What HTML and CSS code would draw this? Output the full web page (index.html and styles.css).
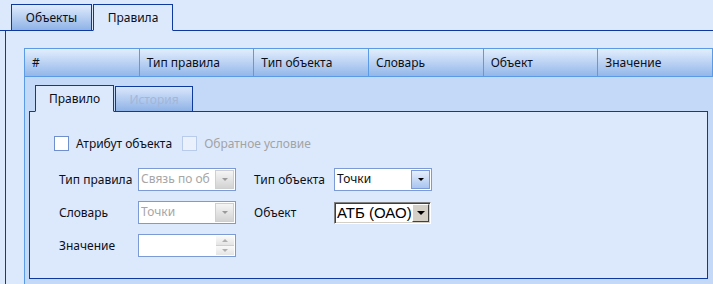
FILE: index.html
```html
<!DOCTYPE html>
<html lang="ru">
<head>
    <meta charset="UTF-8">
    <meta name="viewport" content="width=device-width, initial-scale=1.0">
    <title>Правила</title>
    <link rel="stylesheet" href="styles.css">
</head>
<body>
    <div class="tabs">
        <div class="tab">Объекты</div>
        <div class="tab active">Правила</div>
    </div>
    <div class="panel">
        <div class="grid">
            <div class="grid-head">
                <div class="col">#</div>
                <div class="col">Тип правила</div>
                <div class="col">Тип объекта</div>
                <div class="col">Словарь</div>
                <div class="col">Объект</div>
                <div class="col">Значение</div>
            </div>
            <div class="grid-body">
                <div class="subtabs">
                    <div class="subtab active">Правило</div>
                    <div class="subtab disabled">История</div>
                </div>
                <div class="subpanel">
                    <div class="checks">
                        <label class="check"><span class="box"></span>Атрибут объекта</label>
                        <label class="check disabled"><span class="box"></span>Обратное условие</label>
                    </div>
                    <div class="form">
                        <span class="lbl">Тип правила</span>
                        <div class="combo disabled">
                            <span class="val">Связь по об</span>
                            <span class="btn"><i class="arrow"></i></span>
                        </div>
                        <span></span>
                        <span class="lbl">Тип объекта</span>
                        <div class="combo">
                            <span class="val">Точки</span>
                            <span class="btn"><i class="arrow"></i></span>
                        </div>

                        <span class="lbl">Словарь</span>
                        <div class="combo disabled">
                            <span class="val">Точки</span>
                            <span class="btn"><i class="arrow"></i></span>
                        </div>
                        <span></span>
                        <span class="lbl">Объект</span>
                        <div class="native">
                            <span class="val">АТБ (ОАО)</span>
                            <span class="btn"><i class="arrow"></i></span>
                        </div>

                        <span class="lbl">Значение</span>
                        <div class="spinner">
                            <span class="val"></span>
                            <span class="spin">
                                <span class="up"><i></i></span>
                                <span class="down"><i></i></span>
                            </span>
                        </div>
                    </div>
                </div>
            </div>
        </div>
    </div>
</body>
</html>
```

FILE: styles.css
```css
body {
    margin: 0;
    height: 284px;
    overflow: hidden;
    background: #dce9fd;
    font-family: "Noto Sans", sans-serif;
    font-size: 12px;
    color: #0c0f18;
}

/* top tabs */
.tabs {
    display: flex;
    align-items: flex-end;
    gap: 1px;
    height: 31px;
    box-sizing: border-box;
    padding: 4px 0 0 11px;
    border-bottom: 1px solid #0e3a9e;
}
.tab {
    height: 27px;
    width: 81px;
    box-sizing: border-box;
    margin-bottom: -1px;
    border: 1px solid #0e3a9e;
    background: linear-gradient(#e0ebfc, #8fb3e7);
    line-height: 25px;
    text-align: center;
}
.tab.active {
    width: 80px;
    background: #dce9fd;
    border-bottom-color: #dce9fd;
}

.panel {
    margin-left: 5px;
    height: 236px;
    border-left: 1px solid #0e3a9e;
    padding: 17px 0 0 18px;
}

/* grid */
.grid {
    width: 689px;
}
.grid-head {
    display: grid;
    grid-template-columns: repeat(6, 1fr);
    height: 29px;
    box-sizing: border-box;
    border: 1px solid #5b9be6;
    border-left: none;
    background: linear-gradient(#e3eefd, #93b7e9);
}
.grid-head .col {
    border-left: 1px solid #5b9be6;
    padding-left: 7px;
    line-height: 27px;
    white-space: nowrap;
    overflow: hidden;
}
.grid-body {
    height: 199px;
    border-left: 1px solid #5b9be6;
    background: #c4d9f7;
    padding: 8px 0 0 4px;
}

/* inner tabs */
.subtabs {
    display: flex;
    align-items: flex-end;
    gap: 1px;
    height: 26px;
    padding-left: 6px;
}
.subtab {
    height: 27px;
    width: 79px;
    box-sizing: border-box;
    margin-bottom: -1px;
    border: 1px solid #0e3a9e;
    background: linear-gradient(#d9e6fb, #8fb3e7);
    line-height: 25px;
    text-align: center;
    position: relative;
}
.subtab.active {
    background: #dce9fd;
    border-bottom-color: #dce9fd;
    z-index: 1;
}
.subtab.disabled {
    width: 78px;
    height: 26px;
    color: #a3b6d8;
}
.subpanel {
    width: 679px;
    height: 168px;
    box-sizing: border-box;
    border: 1px solid #0e3a9e;
    background: #dce9fd;
    padding: 23px 0 0 24px;
}

/* checkboxes */
.checks {
    display: flex;
    gap: 10px;
    height: 16px;
}
.check {
    display: flex;
    align-items: center;
    gap: 7px;
}
.check .box {
    width: 13px;
    height: 13px;
    border: 1px solid #6f8fcf;
    background: #fff;
}
.check.disabled {
    color: #a3a3a3;
}
.check.disabled .box {
    border-color: #b8cbea;
    background: #eaf1fd;
}

/* form */
.form {
    display: grid;
    grid-template-columns: 79px 98px 18px 80px 98px;
    grid-auto-rows: 23px;
    row-gap: 10px;
    margin: 17px 0 0 5px;
    align-items: center;
}
.combo, .spinner {
    display: flex;
    height: 23px;
    box-sizing: border-box;
    border: 1px solid #7b9ad6;
    background: #fff;
}
.val {
    flex: 1;
    overflow: hidden;
    white-space: nowrap;
    padding-left: 2px;
    line-height: 20px;
}
.combo .btn {
    width: 19px;
    margin: 1px;
    box-sizing: border-box;
    border: 1px solid #7b9ad6;
    background: linear-gradient(#e6effd, #a9c5ef);
    display: flex;
    align-items: center;
    justify-content: center;
}
.arrow {
    width: 0;
    height: 0;
    border-left: 3px solid transparent;
    border-right: 3px solid transparent;
    border-top: 3px solid #000;
}
.combo.disabled .val {
    color: #a6a6a6;
}
.combo.disabled .btn {
    border-color: #cfcfcf;
    background: linear-gradient(#f5f5f5, #d3d3d3);
}
.combo.disabled .arrow {
    border-top-color: #9a9a9a;
}

/* classic select */
.native {
    display: flex;
    height: 22px;
    width: 97px;
    box-sizing: border-box;
    border: 1px solid;
    border-color: #808080 #ffffff #ffffff #808080;
    box-shadow: inset 1px 1px #404040, inset -1px -1px #d4d0c8;
    background: #fff;
    padding: 1px;
}
.native .val {
    font-family: "Liberation Sans", Arial, sans-serif;
    font-size: 15px;
    line-height: 18px;
    color: #000;
    padding-left: 1px;
}
.native .btn {
    width: 17px;
    box-sizing: border-box;
    background: #d4d0c8;
    border: 1px solid;
    border-color: #ffffff #404040 #404040 #ffffff;
    display: flex;
    align-items: center;
    justify-content: center;
}
.native .arrow {
    border-left-width: 4px;
    border-right-width: 4px;
    border-top-width: 4px;
}

/* spinner */
.spin {
    width: 18px;
    margin: 1px;
    display: flex;
    flex-direction: column;
}
.spin span {
    flex: 1;
    display: flex;
    align-items: center;
    justify-content: center;
    background: linear-gradient(#fafafa, #e4e4e4);
}
.spin .up {
    border-bottom: 1px solid #d0d0d0;
}
.spin .up i {
    border-left: 3px solid transparent;
    border-right: 3px solid transparent;
    border-bottom: 3px solid #b0b0b0;
}
.spin .down i {
    border-left: 3px solid transparent;
    border-right: 3px solid transparent;
    border-top: 3px solid #b0b0b0;
}
```
